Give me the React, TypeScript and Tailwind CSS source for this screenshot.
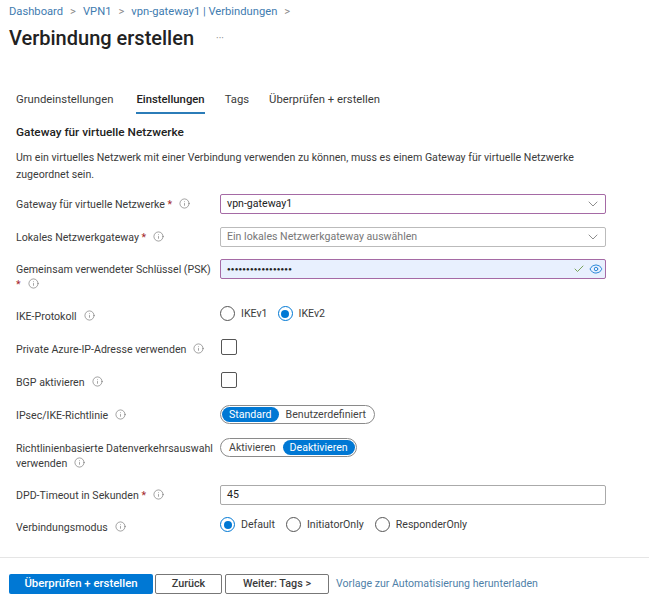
import type { ReactNode } from "react";
import { ChevronDown, Check, Eye, Info } from "lucide-react";

function Hint() {
  return <Info className="ml-[7px] inline-block h-[11px] w-[11px] align-[-1px] text-[#666]" strokeWidth={1.3} />;
}

function Star() {
  return <span className="text-[#a4262c]"> *</span>;
}

function Radio({ label, checked }: { label: string; checked?: boolean }) {
  return (
    <span className="flex items-center gap-[6px]">
      <span className={`flex h-[15px] w-[15px] items-center justify-center rounded-full border ${checked ? "border-[#0078d4]" : "border-[#555]"}`}>
        {checked && <span className="h-[8px] w-[8px] rounded-full bg-[#0078d4]" />}
      </span>
      {label}
    </span>
  );
}

function Toggle({ options, active }: { options: string[]; active: string }) {
  return (
    <div className="flex h-[19px] w-fit items-center rounded-full border border-[#8a8a8a] px-px text-[#444]">
      {options.map((o) => (
        <span key={o} className={`flex h-[15px] items-center rounded-full px-[7px] pt-px ${o === active ? "bg-[#0078d4] text-white" : ""}`}>
          {o}
        </span>
      ))}
    </div>
  );
}

function Row({ h, label, children }: { h: string; label: ReactNode; children: ReactNode }) {
  return (
    <div className={`flex ${h}`}>
      <div className="w-[204px] shrink-0 whitespace-nowrap pt-[3px] leading-[15px]">{label}</div>
      <div>{children}</div>
    </div>
  );
}

function Field({ value, border, muted, noArrow }: { value: string; border: string; muted?: boolean; noArrow?: boolean }) {
  return (
    <div className={`flex h-[20px] w-[386px] items-center justify-between rounded-[2px] border ${border} bg-white pl-[6px] pr-[4px] ${muted ? "text-[#777]" : "text-[#222]"}`}>
      <span>{value}</span>
      {!noArrow && <ChevronDown className="h-[16px] w-[16px] text-[#555]" strokeWidth={1} />}
    </div>
  );
}

export default function App() {
  return (
    <div className="h-[600px] w-[649px] overflow-hidden bg-white font-['Roboto',sans-serif] text-[10.6px] text-[#3b3b3b]">
      <div className="flex h-[22px] items-center gap-[7px] pl-[9px] pt-[2px] text-[11.2px] text-[#3f7cb0]">
        <span>Dashboard</span><span className="text-[#888]">&gt;</span>
        <span>VPN1</span><span className="text-[#888]">&gt;</span>
        <span>vpn-gateway1 | Verbindungen</span><span className="text-[#888]">&gt;</span>
      </div>
      <div className="flex h-[32px] items-center pl-[9px]">
        <h1 className="text-[20px] font-medium text-[#222]">Verbindung erstellen</h1>
        <span className="ml-[22px] text-[10px] text-[#888]">···</span>
      </div>

      <div className="mt-[38px] flex h-[23px] gap-[20px] pl-[16px] text-[11.3px]">
        <span>Grundeinstellungen</span>
        <span className="ml-[3px] h-[22px] border-b-2 border-[#2b7cb8] font-medium text-[#222]">Einstellungen</span>
        <span>Tags</span>
        <span>Überprüfen + erstellen</span>
      </div>

      <div className="mt-[9px] pl-[16px] text-[11.8px] font-medium text-[#222]">Gateway für virtuelle Netzwerke</div>
      <p className="mt-[7px] pl-[16px] text-[10.6px] leading-[17px]">
        Um ein virtuelles Netzwerk mit einer Verbindung verwenden zu können, muss es einem Gateway für virtuelle Netzwerke<br />zugeordnet sein.
      </p>

      <div className="mt-[11px] flex flex-col pl-[16px]">
        <Row h="h-[33px]" label={<>Gateway für virtuelle Netzwerke<Star /><Hint /></>}>
          <Field value="vpn-gateway1" border="border-[#a56aa5]" />
        </Row>
        <Row h="h-[32px]" label={<>Lokales Netzwerkgateway<Star /><Hint /></>}>
          <Field value="Ein lokales Netzwerkgateway auswählen" border="border-[#bbb]" muted />
        </Row>
        <Row h="h-[47px]" label={<>Gemeinsam verwendeter Schlüssel (PSK)<br /><Star /><Hint /></>}>
          <div className="flex h-[20px] w-[386px] items-center rounded-[2px] border border-[#a56aa5] bg-[#e8f0fe] pl-[6px] pr-[2px]">
            <span className="flex-1 text-[6px] tracking-[0.2px] text-[#222]">●●●●●●●●●●●●●●●●●</span>
            <Check className="h-[12px] w-[12px] text-[#7aa35a]" strokeWidth={2} />
            <Eye className="ml-[4px] h-[14px] w-[14px] text-[#2b88d8]" strokeWidth={1.7} />
          </div>
        </Row>
        <Row h="h-[33px]" label={<>IKE-Protokoll<Hint /></>}>
          <div className="flex gap-[10px]"><Radio label="IKEv1" /><Radio label="IKEv2" checked /></div>
        </Row>
        <Row h="h-[33px]" label={<>Private Azure-IP-Adresse verwenden<Hint /></>}>
          <span className="ml-px block h-[16px] w-[16px] rounded-[2px] border border-[#555]" />
        </Row>
        <Row h="h-[33px]" label={<>BGP aktivieren<Hint /></>}>
          <span className="ml-px block h-[16px] w-[16px] rounded-[2px] border border-[#555]" />
        </Row>
        <Row h="h-[33px]" label={<>IPsec/IKE-Richtlinie<Hint /></>}>
          <Toggle options={["Standard", "Benutzerdefiniert"]} active="Standard" />
        </Row>
        <Row h="h-[47px]" label={<>Richtlinienbasierte Datenverkehrsauswahl<br />verwenden<Hint /></>}>
          <Toggle options={["Aktivieren", "Deaktivieren"]} active="Deaktivieren" />
        </Row>
        <Row h="h-[32px]" label={<>DPD-Timeout in Sekunden<Star /><Hint /></>}>
          <Field value="45" border="border-[#aaa]" noArrow />
        </Row>
        <Row h="h-[32px]" label={<>Verbindungsmodus<Hint /></>}>
          <div className="flex gap-[11px]"><Radio label="Default" checked /><Radio label="InitiatorOnly" /><Radio label="ResponderOnly" /></div>
        </Row>
      </div>

      <div className="mt-[8px] flex items-start gap-[2px] border-t border-[#e5e5e5] pl-[9px] pt-[16px]">
        <button className="h-[20px] w-[144px] rounded-[2px] bg-[#0078d4] text-[11.4px] font-medium text-white">Überprüfen + erstellen</button>
        <button className="h-[20px] w-[67px] rounded-[2px] border border-[#777] text-[10.8px] font-medium">Zurück</button>
        <button className="ml-px h-[20px] w-[104px] rounded-[2px] border border-[#777] text-[10.8px] font-medium">Weiter: Tags &gt;</button>
        <span className="ml-[5px] flex h-[20px] items-center text-[#4f7fa8]">Vorlage zur Automatisierung herunterladen</span>
      </div>
    </div>
  );
}
